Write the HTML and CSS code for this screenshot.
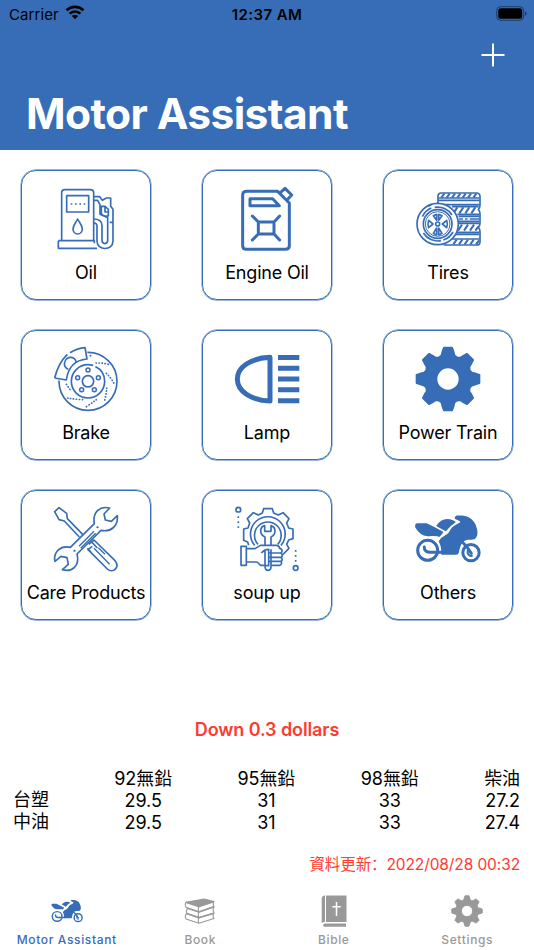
FILE: index.html
```
<!DOCTYPE html>
<html lang="en">
<head>
<meta charset="UTF-8" />
<meta name="viewport" content="width=device-width, initial-scale=1.0"/>
<title>Motor Assistant</title>
<link rel="stylesheet" href="styles.css">
</head>
<body>
  <!-- shared icons -->
  <svg class="sprite" width="0" height="0">
    <symbol id="gear" viewBox="-99 -99 198 198">
      <path fill="currentColor" fill-rule="evenodd" stroke="currentColor" stroke-width="6" stroke-linejoin="round" d="M-12-94H12L17-80A16 16 0 0 0 44.500-68.500L57-75 75-57 68.500-44.500A16 16 0 0 0 80-17L94-12V12L80 17A16 16 0 0 0 68.500 44.500L75 57 57 75 44.500 68.500A16 16 0 0 0 17 80L12 94H-12L-17 80A16 16 0 0 0-44.500 68.500L-57 75-75 57-68.500 44.500A16 16 0 0 0-80 17L-94 12V-12L-80-17A16 16 0 0 0-68.500-44.500L-75-57-57-75-44.500-68.500A16 16 0 0 0-17-80ZM35 0A35 35 0 1 0-35 0A35 35 0 1 0 35 0Z"/>
    </symbol>
    <symbol id="moto" viewBox="111 63 198 198">
      <g fill="currentColor">
        <path d="M114 120Q114 117 118 117H145Q169 128 193 142L184 153C173 148 163 152 148 151C133 150 122 140 114 126Z"/>
        <path d="M178 122C190 105 207 102 222 107L230 111Q214 121 203 136Z"/>
        <path d="M238 94H252C279 96 290 112 295 134Q299 151 289 160Q280 162 268 162C252 165 245 175 240 203Q239 207 234 207H192Q194 187 185 169C190 158 198 156 207 151C216 146 216 137 224 129Q234 121 247 115L250 108L233 100Q232 95 238 94Z"/>
      </g>
      <g fill="none" stroke="currentColor" stroke-width="9">
        <circle cx="149" cy="196" r="30"/>
        <circle cx="279" cy="203" r="24.500"/>
        <path d="M139 186C138 197 146 202 157 202H194M251 169L262 181M267 186L280 205" stroke-linecap="round"/>
        <path d="M271 193C264 207 275 216 284 211" stroke-width="6"/>
      </g>
    </symbol>
  </svg>

  <header class="header">
    <div class="statusbar">
      <div class="carrier">Carrier
        <svg class="wifi" viewBox="0 0 20 15">
          <g fill="none" stroke="#000" stroke-width="2.600">
            <path d="M1.500 5.300A12.200 12.200 0 0 1 18.500 5.300"/>
            <path d="M4.600 8.600A7.800 7.800 0 0 1 15.400 8.600"/>
          </g>
          <path d="M6.800 11A4.600 4.600 0 0 1 13.200 11L10 14.300Z"/>
        </svg>
      </div>
      <div class="time">12:37 AM</div>
      <svg class="battery" viewBox="0 0 32 15">
        <rect x=".7" y=".7" width="27" height="13.600" rx="4" fill="none" stroke="#000" stroke-opacity=".45"/>
        <rect x="2.200" y="2.200" width="24" height="10.600" rx="2.500"/>
        <path d="M29.200 5Q32 7.500 29.200 10Z" fill-opacity=".5"/>
      </svg>
    </div>
    <svg class="add" viewBox="0 0 24 24"><path d="M12 .5V23.500M.5 12H23.500"/></svg>
    <h1>Motor Assistant</h1>
  </header>

  <main class="grid">
    <div class="card">
      <svg class="icon" viewBox="114 63 198 198">
        <path d="M140 226V84Q140 74 150 74H226Q236 74 236 84V226M130 227H238V235M130 227V250H246M155 92H221V141H155ZM188 162C182 174 174 182 174 192A14 15 0 0 0 202 192C202 182 194 174 188 162Z"/>
        <path d="M236 95H254L262 106 274 99H287V124L294 133V228C294 258 246 258 246 228V183Q246 174 236 174M236 106H248L255 119V148L278 158V226C278 239 261 239 261 226V181Q260 162 236 162M259 124H270L280 133V153H269Q259 150 259 144Z"/>
        <path d="M167 117H212" stroke-dasharray="5 8"/>
        <path d="M284 172H294M270 126V141H280"/>
      </svg>
      <span>Oil</span>
    </div>
    <div class="card">
      <svg class="icon can" viewBox="111 63 198 198">
        <path d="M242 79H150Q137 79 137 90V242Q137 253 149 253H265Q277 253 277 243V114Z"/>
        <path d="M249 84L264 70 284 90 270 105M159 101H227L247 122H159Z"/>
        <path d="M184 171H231V207H184ZM184 171L166 153M231 171L248 153M184 207L166 225M231 207L248 225"/>
      </svg>
      <span>Engine Oil</span>
    </div>
    <div class="card">
      <svg class="icon" viewBox="111 63 198 198">
        <path d="M180 116V94Q180 84 190 84H296Q306 84 306 95V120Q306 129 301 134Q306 139 306 146V174Q306 182 301 187Q306 192 306 200V230Q306 240 296 240H197"/>
        <path d="M182 99H304M182 106H304M191 119H304M222 125H302M238 148H304M242 154H304M243 169H304M242 175H304M234 202H304M230 208H304M223 222H304"/>
        <path d="M190 98L199 86M206 98L215 86M222 98L231 86M238 98L247 86M254 98L263 86M270 98L279 86M286 98L295 86M226 145L238 127M244 145L256 127M262 145L274 127M280 145L292 127M240 197L252 179M258 197L270 179M276 197L288 179M292 197L301 185M226 238L236 224M243 238L253 224M260 238L270 224M277 238L287 224M294 238L303 226" stroke-width="6"/>
        <path d="M243 162H255M261 162H269M275 162H304"/>
        <circle cx="179" cy="177" r="62" fill="#fff"/>
        <circle cx="179" cy="177" r="43"/>
        <circle cx="179" cy="177" r="37" stroke-width="3"/>
        <circle cx="179" cy="177" r="6"/>
        <path d="M133 155A51 51 0 0 1 160 129M170 127A51 51 0 0 1 222 150M225 201A51 51 0 0 1 196 225M189 227A51 51 0 0 1 136 204M151 124L161 118"/>
        <path d="M166 152L176 148V166ZM192 152L182 148V166ZM152 166L165 177 152 188Q148 177 152 166ZM206 166L193 177 206 188Q210 177 206 166ZM166 205L176 210V189ZM192 205L182 210V189Z"/>
      </svg>
      <span>Tires</span>
    </div>
    <div class="card">
      <svg class="icon" viewBox="114 63 198 198">
        <circle cx="219" cy="169" r="87" fill="#fff"/>
        <path d="M119 161Q127 95 210 68L217 102Q159 113 154 165Z" fill="#fff" stroke="#fff" stroke-width="8"/>
        <path d="M119 159Q130 114 157 88M165 83Q187 70 210 68L216 102C181 105 159 127 154 165L119 159M149 123C144 91 182 89 184 114M149 123Q154 131 160 133"/>
        <circle cx="219" cy="169" r="50" stroke-dasharray="250 7 60 0"/>
        <circle cx="219" cy="169" r="17"/>
        <g stroke-width="4.500">
          <circle cx="219" cy="135" r="6"/><circle cx="188" cy="158" r="6"/><circle cx="250" cy="158" r="6"/><circle cx="200" cy="194" r="6"/><circle cx="238" cy="194" r="6"/>
        </g>
        <path d="M226 92H228M243 114Q266 113 287 120M274 145Q290 160 300 181M275 189Q274 210 267 233M244 224Q230 235 211 247M158 219Q178 223 203 224M154 178L168 197" stroke-dasharray="1 8" stroke-linecap="round"/>
      </svg>
      <span>Brake</span>
    </div>
    <div class="card">
      <svg class="icon lamp" viewBox="111 63 198 198">
        <path d="M219 97V228C161 226 121 198 121 162C121 127 161 99 219 97Z"/>
        <path d="M243 97.500H307M243 130H307M243 162H307M243 194.500H307M243 227H307"/>
      </svg>
      <span>Lamp</span>
    </div>
    <div class="card">
      <svg class="icon"><use href="#gear"/></svg>
      <span>Power Train</span>
    </div>
    <div class="card">
      <svg class="icon" viewBox="114 63 198 198">
        <path d="M203 148L157 101 155 85 132 68 119 80 132 104 148 108 193 156M221 178L237 165 300 227C316 246 294 267 277 252L219 194 232 184M229 170L247 189M217 190L228 201"/>
        <path d="M166 187L238 116C232 82 254 62 284 69L267 87 271 105 289 109 307 92C310 124 287 142 258 136L186 207C195 242 171 263 142 254L160 238 156 218 138 214 120 229C114 202 136 180 166 187Z"/>
        <path d="M192 184L237 139M197 190L242 145M237 190L284 238M250 188L270 208" stroke-width="4"/>
        <path d="M178 197H179M247 127H248" stroke-linecap="round" stroke-width="6"/>
      </svg>
      <span>Care Products</span>
    </div>
    <div class="card">
      <svg class="icon" viewBox="111 63 198 198">
        <path d="M155 181L152 171 140 166V132L153 129 158 114 151 101 169 83 184 90 196 84 200 71H226L230 84 244 90 258 83 276 101 269 114 275 129 288 132V161L275 165 269 178 276 190 256 210"/>
        <path d="M173 181A52 52 0 1 1 252 181M183 178A40 40 0 1 1 242 178"/>
        <path d="M204 181V156C186 149 188 125 203 122V139H222V122C238 127 238 149 222 156V181"/>
        <path d="M132 184H148V241H132ZM148 191H174L190 181H239Q247 182 248 190C257 191 257 204 250 204C258 206 257 217 250 217C258 219 257 229 250 229C256 231 254 241 247 241H222M148 231H180L191 241H203M193 204Q202 193 215 193V191M215 193V242H204V193M204 242Q204 256 213 256Q222 256 222 246V193M216 204H250M216 217H250M216 229H250"/>
        <circle cx="124" cy="74" r="7"/><circle cx="296" cy="249" r="7"/>
        <path d="M124 94V130M296 195V233" stroke-dasharray="5 10"/>
      </svg>
      <span>soup up</span>
    </div>
    <div class="card">
      <svg class="icon"><use href="#moto"/></svg>
      <span>Others</span>
    </div>
  </main>

  <section class="prices">
    <p class="change">Down 0.3 dollars</p>
    <div class="table">
      <div class="col names"><span>台塑</span><span>中油</span></div>
      <div class="col"><span>92無鉛</span><span>29.5</span><span>29.5</span></div>
      <div class="col"><span>95無鉛</span><span>31</span><span>31</span></div>
      <div class="col"><span>98無鉛</span><span>33</span><span>33</span></div>
      <div class="col last"><span>柴油</span><span>27.2</span><span>27.4</span></div>
    </div>
    <p class="updated">資料更新<span class="colon">：</span>2022/08/28 00:32</p>
  </section>

  <nav class="tabs">
    <div class="tab active">
      <svg><use href="#moto"/></svg>
      <span>Motor Assistant</span>
    </div>
    <div class="tab">
      <svg viewBox="0 0 32 32" fill="none" stroke="currentColor" stroke-width="1.100" stroke-linejoin="round">
        <path d="M2 7.200L20 4 30 6.500 15 11.500Z" fill="currentColor"/>
        <path d="M2 7.200Q.5 10 2.300 12.500L15 17Q13.500 14 15 11.500M30 6.500Q28.500 9 30 11.500L15 17M4 13.200Q1.500 15 3 18.500L15 22.500Q13.500 20 15 17M30 11.500L29.500 13Q28.500 15.500 30 18L15 22.500M3 18.500Q.2 20 2 24L15 28.200Q13.500 25.500 15 22.500M30 18L29.500 19Q28.500 21.500 30 23.500L15 28.200"/>
        <path d="M2 7.200L15 11.500 30 6.500M3 13L15 17 30 11.800M2.500 18.500L15 22.800 30 18.200" stroke-width="1.600"/>
      </svg>
      <span>Book</span>
    </div>
    <div class="tab">
      <svg viewBox="0 0 32 32" fill="currentColor">
        <path d="M8 .5H28.500V27H8ZM7 .5Q3.700.7 3.700 4V28Q5 27 7 26.800ZM6.500 28.500H28V31.700H6.500Q3.500 30.500 6.500 28.500Z"/>
        <path d="M18.500 7V21M14.300 11.700H22.700" stroke="#fff" stroke-width="1.500"/>
      </svg>
      <span>Bible</span>
    </div>
    <div class="tab">
      <svg><use href="#gear"/></svg>
      <span>Settings</span>
    </div>
  </nav>
</body>
</html>
```
FILE: styles.css
```
:root {
  --blue: #376db6;
  --red: #ff3b30;
  --gray: #999;
  --font: Inter, "Noto Sans CJK TC", sans-serif;
}

* { box-sizing: border-box; }

body {
  margin: 0;
  height: 950px;
  display: flex;
  flex-direction: column;
  font-family: var(--font);
  background: #fff;
  color: #000;
  overflow: hidden;
}

.sprite { position: absolute; }

.header {
  height: 150px;
  background: var(--blue);
  display: flex;
  flex-direction: column;
}

.statusbar {
  display: grid;
  grid-template-columns: 1fr auto 1fr;
  align-items: center;
  height: 28px;
  padding: 0 6px 0 9px;
  font-size: 15px;
}

.carrier {
  display: flex;
  align-items: center;
  gap: 6px;
  letter-spacing: .1px;
}

.wifi { width: 20px; height: 15px; margin-top: -3px; }

.time {
  font-weight: 600;
  letter-spacing: .4px;
  margin-right: 3px;
}

.battery {
  width: 32px;
  height: 15px;
  justify-self: end;
  margin-top: -2px;
}

.add {
  width: 24px;
  height: 24px;
  align-self: flex-end;
  margin: 15px 29px 0 0;
  stroke: #fff;
  stroke-width: 2;
}

h1 {
  margin: 21px 0 0 26px;
  color: #fff;
  font-size: 42.5px;
  line-height: 52px;
  font-weight: 700;
  letter-spacing: -.6px;
  white-space: nowrap;
}

.grid {
  display: grid;
  grid-template-columns: repeat(3, 130px);
  grid-auto-rows: 130px;
  justify-content: space-between;
  row-gap: 30px;
  padding: 20px 21px 0;
}

.card {
  display: flex;
  flex-direction: column;
  align-items: center;
  border: 1px solid var(--blue);
  box-shadow: 0 0 0 .4px var(--blue);
  border-radius: 15px;
  padding-top: 15px;
  font-size: 18px;
  line-height: 24px;
  letter-spacing: -.2px;
  white-space: nowrap;
}

.card span { margin-top: 9px; }

.icon {
  width: 66px;
  height: 66px;
  flex: none;
  color: var(--blue);
  fill: none;
  stroke: currentColor;
  stroke-width: 5;
  stroke-linejoin: round;
}

.can { stroke-width: 9; stroke-linecap: round; }
.lamp { stroke-width: 15; }

.prices {
  padding: 98px 14px 0;
}

.change {
  margin: 0;
  color: var(--red);
  font-size: 18px;
  line-height: 24px;
  font-weight: 600;
  letter-spacing: -.1px;
  text-align: center;
}

.table {
  display: flex;
  justify-content: space-between;
  margin-top: 26px;
  font-size: 18px;
  line-height: 22px;
  letter-spacing: -.1px;
}

.col {
  display: flex;
  flex-direction: column;
  align-items: center;
}

.col span { height: 22px; }
.names { padding-top: 21px; margin-left: -1px; }
.last { align-items: flex-end; }

.updated {
  margin: 19px 0 0;
  color: var(--red);
  font-size: 15.5px;
  line-height: 20px;
  letter-spacing: -.1px;
  text-align: right;
}

.colon { font-family: "Noto Sans CJK SC", sans-serif; }

.tabs {
  display: flex;
  margin-top: auto;
  padding-bottom: 2px;
}

.tab {
  flex: 1;
  display: flex;
  flex-direction: column;
  align-items: center;
  color: var(--gray);
  font-size: 12px;
  line-height: 16px;
  font-weight: 500;
  letter-spacing: .65px;
}

.tab svg {
  width: 32px;
  height: 32px;
  margin-bottom: 5px;
}

.active { color: var(--blue); }
```
